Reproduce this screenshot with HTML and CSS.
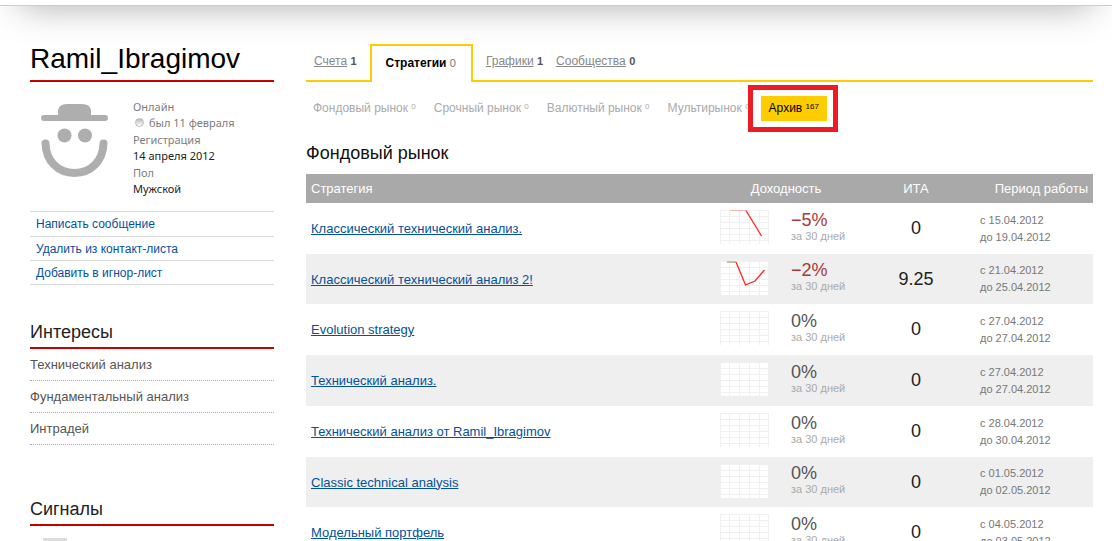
FILE: index.html
```
<!DOCTYPE html>
<html lang="ru">
<head>
<meta charset="utf-8">
<title>Ramil_Ibragimov</title>
<link rel="stylesheet" href="styles.css">
</head>
<body>
<svg class="defs" aria-hidden="true">
  <symbol id="grid" viewBox="0 0 49 34">
    <rect width="49" height="34" fill="#fff"/>
    <path d="M.5 0V34M9.5 0V34M19.5 0V34M29.5 0V34M39.5 0V34M48.5 0V34M0 .5H49M0 6.5H49M0 12.5H49M0 18.5H49M0 24.5H49M0 30.5H49" fill="none" stroke="#f0f0f0"/>
  </symbol>
</svg>
<header class="topbar"><div class="topbar-shade"></div></header>
<div class="page">
  <aside class="side">
    <h1 class="name">Ramil_Ibragimov</h1>
    <div class="profile">
      <svg class="avatar" viewBox="0 0 68 74" aria-label="Аватар">
        <g fill="#aeaeae">
          <path d="M17 11V6Q18 0 26 0H41Q49 0 50 6V11H64A3 3 0 0 1 64 17H3A3 3 0 0 1 3 11Z"/>
          <circle cx="23.500" cy="31.500" r="7"/><circle cx="44" cy="31.500" r="7"/>
        </g>
        <path d="M4.500 39.500C5 57 17 69 33.500 69S62 57 62.500 39.500" fill="none" stroke="#aeaeae" stroke-width="8" stroke-linecap="round"/>
      </svg>
      <dl class="meta">
        <dt>Онлайн</dt><dd class="muted"><i class="dot"></i>был 11 февраля</dd>
        <dt>Регистрация</dt><dd>14 апреля 2012</dd>
        <dt>Пол</dt><dd>Мужской</dd>
      </dl>
    </div>
    <ul class="actions">
      <li><a href="#">Написать сообщение</a></li>
      <li><a href="#">Удалить из контакт-листа</a></li>
      <li><a href="#">Добавить в игнор-лист</a></li>
    </ul>
    <h2 class="side-title">Интересы</h2>
    <ul class="interests">
      <li>Технический анализ</li>
      <li>Фундаментальный анализ</li>
      <li>Интрадей</li>
    </ul>
    <h2 class="side-title">Сигналы</h2>
    <div class="signal"></div>
  </aside>
  <main class="content">
    <nav class="tabs">
      <span class="tab"><a href="#">Счета</a> <b>1</b></span>
      <span class="tab tab-active"><strong>Стратегии</strong> <span class="count">0</span></span>
      <span class="tab"><a href="#">Графики</a> <b>1</b></span>
      <span class="tab"><a href="#">Сообщества</a> <b>0</b></span>
    </nav>
    <nav class="markets">
      <a href="#">Фондовый рынок <sup>0</sup></a>
      <a href="#">Срочный рынок <sup>0</sup></a>
      <a href="#">Валютный рынок <sup>0</sup></a>
      <a href="#">Мультирынок <sup>0</sup></a>
      <a href="#" class="archive">Архив <sup>167</sup><span class="highlight"></span></a>
    </nav>
    <h2 class="title">Фондовый рынок</h2>
    <table class="strategies">
      <colgroup><col><col class="col-chart"><col class="col-yield"><col class="col-ita"><col class="col-period"></colgroup>
      <thead><tr><th class="left">Стратегия</th><th colspan="2">Доходность</th><th>ИТА</th><th class="right">Период работы</th></tr></thead>
      <tbody>
        <tr><td><a href="#">Классический технический анализ.</a></td><td><svg class="chart" viewBox="0 0 49 34"><use href="#grid"/><path d="M10 .5H26" stroke="#f7b5b5" fill="none"/><path class="trend" d="M26 .5L41.500 26"/></svg></td><td class="loss"><span class="pct">−5%</span><small>за 30 дней</small></td><td class="ita">0</td><td class="period">с 15.04.2012<br>до 19.04.2012</td></tr>
        <tr><td><a href="#">Классический технический анализ 2!</a></td><td><svg class="chart" viewBox="0 0 49 34"><use href="#grid"/><path d="M7 1H16" stroke="#c3bea5" stroke-width="2" fill="none"/><path class="trend" d="M16 1L25.500 24L35 20L44.500 9"/></svg></td><td class="loss"><span class="pct">−2%</span><small>за 30 дней</small></td><td class="ita">9.25</td><td class="period">с 21.04.2012<br>до 25.04.2012</td></tr>
        <tr><td><a href="#">Evolution strategy</a></td><td><svg class="chart"><use href="#grid"/></svg></td><td><span class="pct">0%</span><small>за 30 дней</small></td><td class="ita">0</td><td class="period">с 27.04.2012<br>до 27.04.2012</td></tr>
        <tr><td><a href="#">Технический анализ.</a></td><td><svg class="chart"><use href="#grid"/></svg></td><td><span class="pct">0%</span><small>за 30 дней</small></td><td class="ita">0</td><td class="period">с 27.04.2012<br>до 27.04.2012</td></tr>
        <tr><td><a href="#">Технический анализ от Ramil_Ibragimov</a></td><td><svg class="chart"><use href="#grid"/></svg></td><td><span class="pct">0%</span><small>за 30 дней</small></td><td class="ita">0</td><td class="period">с 28.04.2012<br>до 30.04.2012</td></tr>
        <tr><td><a href="#">Classic technical analysis</a></td><td><svg class="chart"><use href="#grid"/></svg></td><td><span class="pct">0%</span><small>за 30 дней</small></td><td class="ita">0</td><td class="period">с 01.05.2012<br>до 02.05.2012</td></tr>
        <tr><td><a href="#">Модельный портфель</a></td><td><svg class="chart"><use href="#grid"/></svg></td><td><span class="pct">0%</span><small>за 30 дней</small></td><td class="ita">0</td><td class="period">с 04.05.2012<br>до 03.05.2012</td></tr>
      </tbody>
    </table>
  </main>
</div>
</body>
</html>
```
FILE: styles.css
```
* { box-sizing: border-box; }
body { margin: 0; height: 100vh; overflow: hidden; background: #fff; color: #222; font-family: "Liberation Sans", Arial, sans-serif; font-size: 13px; }
ul, dl, dd, h1, h2 { margin: 0; padding: 0; list-style: none; }
h1, h2 { font-weight: normal; }
.defs { position: absolute; width: 0; height: 0; }
.topbar { position: relative; height: 6px; border-bottom: 1px solid #ccc; }
.topbar-shade { position: absolute; z-index: -1; top: 6px; left: 0; right: 0; height: 40px; overflow: hidden; }
.topbar-shade::before { content: ""; position: absolute; top: -40px; left: 20px; right: 20px; height: 40px; box-shadow: 0 0 36px rgba(0, 0, 0, .34); }
.page { display: grid; grid-template-columns: 244px 1fr; gap: 32px; padding: 36px 19px 0 30px; }

.name { height: 40px; line-height: 34px; font-size: 28px; color: #000; border-bottom: 2px solid #c40000; }
.profile { display: flex; gap: 24px; padding: 16px 0 0 11px; }
.avatar { width: 68px; height: 74px; margin-top: 6px; }
.meta { padding-bottom: 14px; font-family: "Noto Sans", sans-serif; font-size: 11px; line-height: 16px; color: #222; }
.meta dt { line-height: 17px; }
.meta dt, .meta .muted { color: #7d7d7d; }
.dot { display: inline-block; width: 9px; height: 9px; margin: 0 5px 0 2px; border-radius: 50%; border: 1px solid #bbb; background: linear-gradient(#bbb, #fff); }
.actions { border-top: 1px solid #d9d9d9; }
.actions li { height: 24px; padding-left: 6px; line-height: 25px; font-size: 12px; border-bottom: 1px solid #d9d9d9; }
.actions li:first-child { height: 25px; }
a { color: #04519b; }
.actions a { text-decoration: none; }
.side-title { margin-top: 34px; height: 30px; line-height: 26px; font-size: 18px; border-bottom: 2px solid #c40000; }
.interests { margin-bottom: 51px; color: #555; }
.interests li { height: 32px; line-height: 32px; border-bottom: 1px dotted #aaa; }
.signal { width: 24px; height: 24px; margin: 12px 0 0 13px; background: #ddd; }

.tabs { display: flex; height: 40px; padding-left: 8px; border-bottom: 2px solid #fc0; font-size: 12px; }
.tab { line-height: 38px; margin-right: 13px; color: #555; }
.tab a { color: #888; }
.tab b { font-size: 11px; }
.tab-active { height: 38px; margin-top: 2px; padding: 0 15px 0 14px; line-height: 34px; background: #fff; border: 2px solid #fc0; border-bottom: 0; }
.tab-active strong { color: #000; }
.tab-active .count { font-size: 11px; color: #777; }
.markets { display: flex; gap: 18px; padding: 14px 0 0 7px; font-size: 12px; line-height: 24px; }
.markets a { color: #aaa; text-decoration: none; white-space: nowrap; }
.markets sup { font-size: 8px; line-height: 1; vertical-align: 3px; }
.markets .archive { position: relative; margin-left: -7px; padding: 0 8px; height: 25px; background: #fc0; color: #000; }
.highlight { position: absolute; inset: -11px -11px -11px -13px; border: 5px solid #ed1c24; }
.title { margin: 20px 0 9px; font-size: 18px; line-height: 24px; color: #111; }

.strategies { width: 100%; table-layout: fixed; border-collapse: collapse; }
.col-chart, .col-yield { width: 71px; }
.col-ita, .col-period { width: 118px; }
th { height: 29px; padding: 0 5px; background: #a9a9a9; color: #fff; font-weight: normal; }
.left { text-align: left; }
.right { text-align: right; }
tbody tr { height: 51px; }
tbody tr:nth-child(even) { background: #efefef; }
tbody tr:nth-child(4n+2) { height: 50px; }
td { padding: 0 5px; }
.chart { display: block; width: 49px; height: 34px; margin-top: -3px; }
.trend { fill: none; stroke: #f22; stroke-width: 1.3; }
.pct { display: block; margin-top: -4px; font-size: 18px; line-height: 18px; color: #555; }
.loss .pct { color: #aa3939; }
small { display: block; font-size: 11px; line-height: 14px; color: #aaa; }
.ita { text-align: center; font-size: 18px; }
.period { font-size: 11px; line-height: 17px; color: #777; }
```
